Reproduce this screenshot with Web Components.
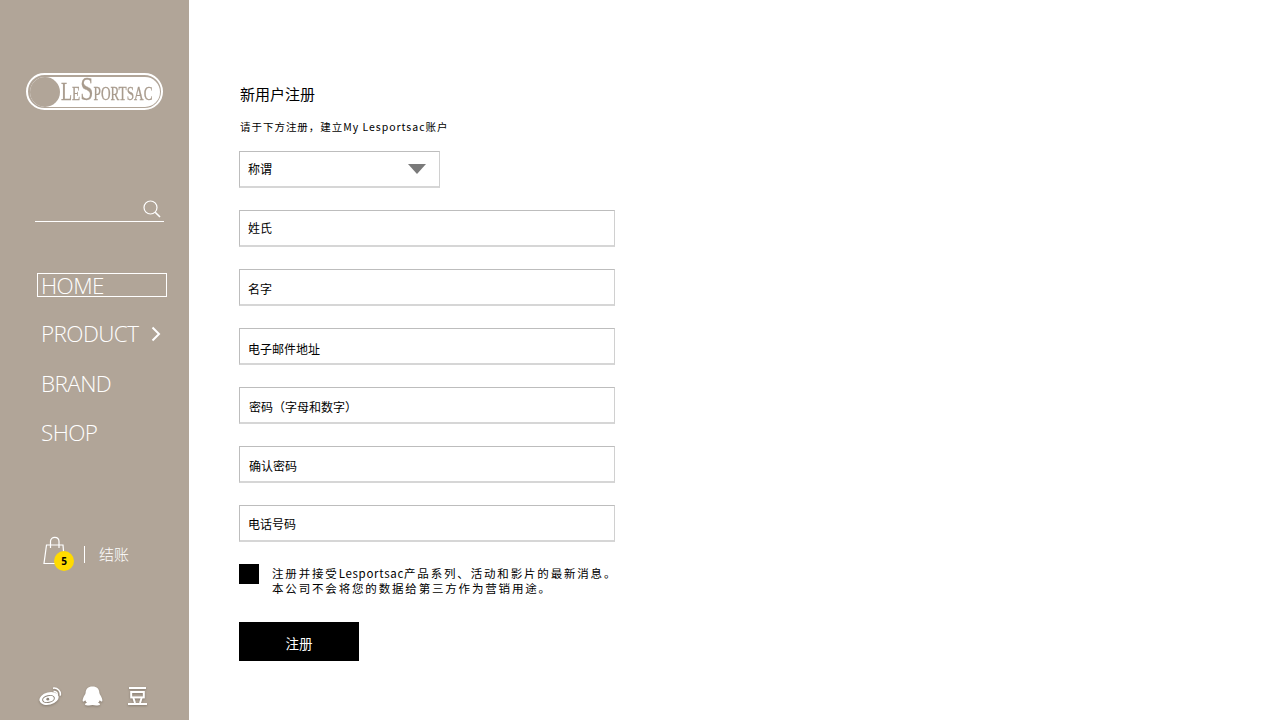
<!DOCTYPE html>
<html lang="zh">
<head>
<meta charset="utf-8">
<title>新用户注册</title>
<style>
html, body { margin: 0; height: 100%; background: #fff; }
body { font-family: "Liberation Sans", "Noto Sans CJK SC", sans-serif; }
</style>
</head>
<body>
<app-shell>
  <side-bar slot="side"></side-bar>
  <signup-form slot="main"></signup-form>
</app-shell>

<script>
class AppShell extends HTMLElement {
  constructor() {
    super();
    this.attachShadow({ mode: 'open' }).innerHTML = `
<style>
:host { display: flex; width: 1280px; height: 720px; overflow: hidden; }
</style>
<slot name="side"></slot>
<slot name="main"></slot>`;
  }
}

class BrandLogo extends HTMLElement {
  constructor() {
    super();
    this.attachShadow({ mode: 'open' }).innerHTML = `
<style>
:host { display: block; box-sizing: border-box; width: 137px; height: 37px; padding: 1.5px;
  border: 2px solid #fff; border-radius: 19px; }
.pill { display: flex; align-items: center; height: 100%; background: #fff; border-radius: 15px; }
.disc { flex: none; width: 30px; height: 30px; border-radius: 50%; background: #b1a598; }
.name { flex: none; width: 92px; margin-left: 1px; transform: scaleX(.7); transform-origin: 0 50%;
  font: 26px/30px "Liberation Serif", serif; color: #a89b8d; white-space: nowrap;
  -webkit-text-stroke: .3px #a89b8d; }
.small { font-size: 19px; }
.big { font-size: 34px; }
</style>
<div class="pill">
  <span class="disc"></span>
  <span class="name">L<span class="small">E</span><span class="big">S</span><span class="small">PORTSAC</span></span>
</div>`;
  }
}

class SearchBox extends HTMLElement {
  constructor() {
    super();
    this.attachShadow({ mode: 'open' }).innerHTML = `
<style>
:host { display: flex; justify-content: flex-end; box-sizing: border-box; width: 129px; height: 23px;
  padding-right: 2px; border-bottom: 1px solid #fff; }
svg { width: 20px; height: 20px; }
</style>
<svg viewBox="0 0 20 20" fill="none" stroke="#fff">
  <circle cx="8.5" cy="8.5" r="6.5" stroke-width="1.2"/>
  <path d="M13.2 13.2 L18 18" stroke-width="1.6"/>
</svg>`;
  }
}

class NavItem extends HTMLElement {
  constructor() {
    super();
    this.attachShadow({ mode: 'open' }).innerHTML = `
<style>
:host { display: flex; align-items: center; box-sizing: border-box; width: 130px; height: 24px;
  padding: 2px 0 0 3px; border: 1px solid transparent; color: #fff;
  font: 300 22.5px/24px "Open Sans", sans-serif; letter-spacing: -.6px; }
:host([active]) { border: 1px solid #fff; }
.arrow { display: none; margin-left: auto; margin-right: 5px; }
:host([more]) .arrow { display: block; }
</style>
<slot></slot>
<svg class="arrow" width="10" height="16" viewBox="0 0 10 16" fill="none" stroke="#fff" stroke-width="2"><path d="M1.5 1.5 L8 8 L1.5 14.5"/></svg>`;
  }
}

class CartLink extends HTMLElement {
  constructor() {
    super();
    this.attachShadow({ mode: 'open' }).innerHTML = `
<style>
:host { display: flex; align-items: center; color: #fff; }
.bag { position: relative; width: 32px; height: 36px; }
.bag svg { display: block; }
.count { position: absolute; left: 12px; top: 15px; width: 20px; height: 20px; border-radius: 50%;
  background: #ffdb00; color: #000; font: 700 10px/20px "Open Sans", sans-serif; text-align: center; }
.bar { width: 1px; height: 17px; margin: 0 14px 0 10px; background: #fff; }
.label { margin-bottom: 1px; font: 300 15px/20px "Noto Sans CJK SC", sans-serif; }
</style>
<span class="bag">
  <svg width="26" height="30" viewBox="0 0 26 30" fill="none" stroke="#fff" stroke-width="1.2">
    <path d="M4.5 9 H21 L22.5 27.5 H2 Z"/>
    <path d="M8.5 12 V5.5 C8.5 0 17 0 17 5.5 V12"/>
  </svg>
  <span class="count">5</span>
</span>
<span class="bar"></span>
<span class="label">结账</span>`;
  }
}

class SocialLinks extends HTMLElement {
  constructor() {
    super();
    this.attachShadow({ mode: 'open' }).innerHTML = `
<style>
:host { display: flex; align-items: center; }
svg { display: block; flex: none; filter: drop-shadow(0 1px 1px rgba(80,70,60,.45)); }
.qq { margin-left: 20px; }
.dou { margin-left: 25px; }
</style>
<svg width="23" height="18" viewBox="0 0 23 18">
  <ellipse cx="10" cy="11.5" rx="9.8" ry="6.2" fill="#fff" transform="rotate(-14 10 11.5)"/>
  <ellipse cx="9.5" cy="12" rx="6" ry="3.4" fill="none" stroke="#8d8479" stroke-width="1" transform="rotate(-14 9.5 12)"/>
  <circle cx="8.8" cy="12.2" r="1.4" fill="#8d8479"/>
  <path fill="none" stroke="#fff" stroke-width="1.5" d="M14 1.2 C18.5 .6 22.2 4 21.2 8.6 M14.6 4.4 C17 4.2 18.6 5.8 18.1 8"/>
</svg>
<svg class="qq" width="21" height="20" viewBox="0 0 21 20">
  <path fill="#fff" d="M10.5 .5 C6 .5 3.6 3.2 3.6 7 C3.2 8.6 2 10 1.2 12 C.4 14 .4 15.6 1.2 15.6 C1.9 15.6 2.7 14.9 3.2 14.2 C3.6 15.4 4.2 16.2 5 16.8 C3.6 17.2 2.8 17.8 3 18.4 C3.4 19.6 8 19.8 10.5 19 C13 19.8 17.6 19.6 18 18.4 C18.2 17.8 17.4 17.2 16 16.8 C16.8 16.2 17.4 15.4 17.8 14.2 C18.3 14.9 19.1 15.6 19.8 15.6 C20.6 15.6 20.6 14 19.8 12 C19 10 17.8 8.6 17.4 7 C17.4 3.2 15 .5 10.5 .5 Z"/>
</svg>
<svg class="dou" width="19" height="18" viewBox="0 0 19 18" fill="none" stroke="#fff" stroke-width="2">
  <path d="M1 1 H18 M0 17 H19"/>
  <rect x="3.2" y="5" width="12.6" height="5.4"/>
  <path d="M5.4 11 L7 16 M13.6 11 L12 16"/>
</svg>`;
  }
}

class SideBar extends HTMLElement {
  constructor() {
    super();
    this.attachShadow({ mode: 'open' }).innerHTML = `
<style>
:host { display: flex; flex-direction: column; flex: none; box-sizing: border-box; width: 189px; height: 720px;
  padding: 73px 0 0 26px; background: #b1a598; }
search-box { margin: 89px 0 0 9px; }
nav { display: flex; flex-direction: column; gap: 25px; margin: 51px 0 0 11px; }
nav-item[more] { margin: -1px 0 1px; }
cart-link { margin: 92px 0 0 16px; }
social-links { margin: 114px 0 0 13px; }
</style>
<brand-logo></brand-logo>
<search-box></search-box>
<nav>
  <nav-item active>HOME</nav-item>
  <nav-item more>PRODUCT</nav-item>
  <nav-item>BRAND</nav-item>
  <nav-item>SHOP</nav-item>
</nav>
<cart-link></cart-link>
<social-links></social-links>`;
  }
}

class FormField extends HTMLElement {
  constructor() {
    super();
    this.attachShadow({ mode: 'open' }).innerHTML = `
<style>
:host { display: flex; align-items: center; box-sizing: border-box; width: 376px; height: 37px;
  padding: 0 0 0 8px; border: 1px solid #bdbdbd; border-bottom: 2px solid #d6d6d6; border-right-color: #d0d0d0;
  color: #000; font: 12px/16px "Noto Sans CJK SC", sans-serif; }
:host([select]) { width: 201px; }
.arrow { display: none; margin: 0 13px 0 auto; width: 0; height: 0;
  border-left: 9px solid transparent; border-right: 9px solid transparent; border-top: 10px solid #7a7a7a; }
:host([select]) .arrow { display: block; }
</style>
<slot></slot>
<span class="arrow"></span>`;
  }
}

class SignupForm extends HTMLElement {
  constructor() {
    super();
    this.attachShadow({ mode: 'open' }).innerHTML = `
<style>
:host { display: flex; flex-direction: column; flex: 1; box-sizing: border-box; padding: 84px 0 0 50px;
  color: #000; font-family: "Noto Sans CJK SC", sans-serif; }
h1 { margin: 0 0 0 1px; font: 400 15px/20px "Noto Sans CJK SC", sans-serif; }
.hint { margin: 16px 0 0 1px; font: 10.5px/14px "Noto Sans CJK SC", sans-serif; letter-spacing: .97px; }
.fields { display: flex; flex-direction: column; gap: 22px; margin-top: 17px; }
.consent { display: flex; gap: 13px; margin-top: 22px; }
.check { flex: none; width: 20px; height: 20px; background: #000; }
.consent p { margin: 2px 0 0; width: 352px; font: 11.5px/15px "Noto Sans CJK SC", sans-serif; letter-spacing: 1.83px; white-space: nowrap; }
.consent b { font-weight: 400; letter-spacing: .7px; }
button { width: 120px; height: 39px; margin-top: 26px; padding: 2px 0 0; border: 0; background: #000; color: #fff;
  font: 13.5px/20px "Noto Sans CJK SC", sans-serif; }
</style>
<h1>新用户注册</h1>
<div class="hint">请于下方注册，建立My Lesportsac账户</div>
<div class="fields">
  <form-field select style="padding-top:0">称谓</form-field>
  <form-field>姓氏</form-field>
  <form-field style="padding-top:3px">名字</form-field>
  <form-field style="padding-top:5px">电子邮件地址</form-field>
  <form-field style="padding:3px 0 0 9px">密码（字母和数字）</form-field>
  <form-field style="padding:3px 0 0 9px">确认密码</form-field>
  <form-field style="padding-top:1px">电话号码</form-field>
</div>
<div class="consent">
  <span class="check"></span>
  <p>注册并接受<b>Lesportsac</b>产品系列、活动和影片的最新消息。<br>本公司不会将您的数据给第三方作为营销用途。</p>
</div>
<button>注册</button>`;
  }
}

customElements.define('app-shell', AppShell);
customElements.define('brand-logo', BrandLogo);
customElements.define('search-box', SearchBox);
customElements.define('nav-item', NavItem);
customElements.define('cart-link', CartLink);
customElements.define('social-links', SocialLinks);
customElements.define('side-bar', SideBar);
customElements.define('form-field', FormField);
customElements.define('signup-form', SignupForm);
</script>
</body>
</html>
